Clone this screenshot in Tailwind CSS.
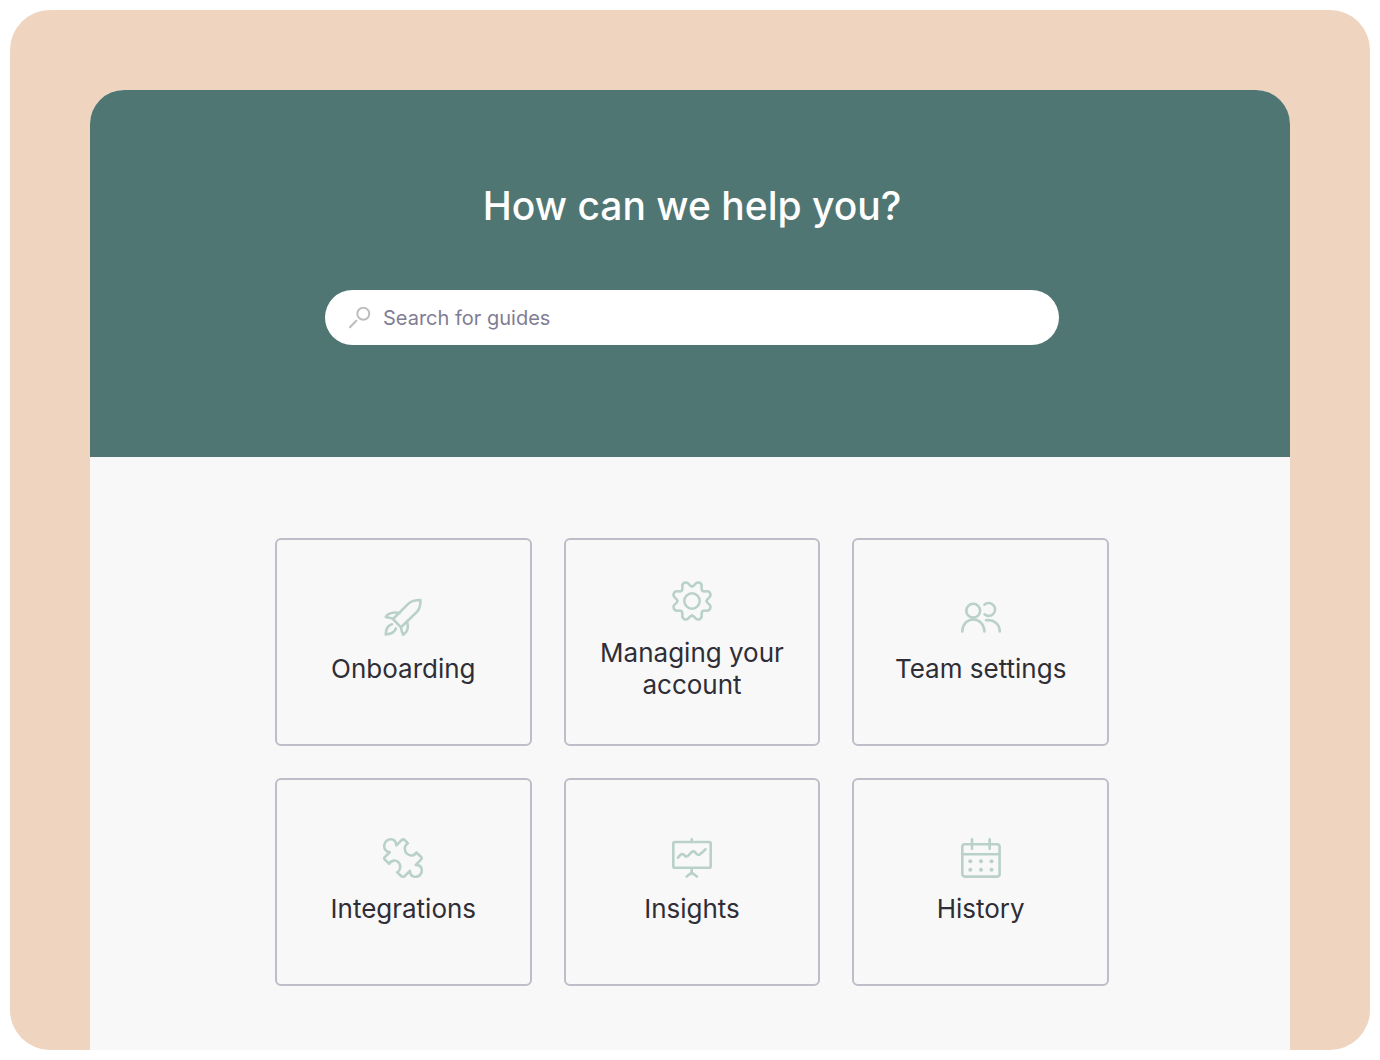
<!DOCTYPE html>
<html lang="en">
<head>
<meta charset="utf-8">
<meta name="viewport" content="width=device-width, initial-scale=1">
<title>Help center</title>
<script src="https://cdn.jsdelivr.net/npm/@tailwindcss/browser@4"></script>
</head>
<body class="flex min-h-screen flex-col bg-white p-[10px] font-['Inter',sans-serif] text-[#2f2e36]">
<div class="flex grow flex-col rounded-[40px] bg-[#efd4bf] px-20 pt-20">
  <div class="flex grow flex-col overflow-hidden rounded-t-[34px] bg-[#f8f8f8]">
    <header class="flex flex-col items-center bg-[#507673] pt-[92px] pb-28 pl-1">
      <h1 class="text-center text-[39px] leading-12 font-medium text-white">How can we help you?</h1>
      <form role="search" class="mt-15 flex h-[55px] w-full max-w-[734px] items-center gap-3 rounded-full bg-white px-6">
        <label for="q" class="shrink-0"><svg class="size-[22px] text-[#bdbcc0]" viewBox="0 0 22 22" fill="none" stroke="currentColor" stroke-width="2" stroke-linecap="round" role="img" aria-label="Search"><circle cx="14.3" cy="6.8" r="6"/><path d="M7.3 13.800 1 20.200"/></svg></label>
        <input id="q" type="search" placeholder="Search for guides" class="h-full min-w-0 grow bg-transparent text-[20px] outline-none placeholder:text-[#7f7d94]">
      </form>
    </header>
    <main class="flex justify-center pt-[81px] pb-16 pl-1">
      <nav aria-label="Guides" class="grid w-full max-w-[834px] auto-rows-[208px] grid-cols-3 gap-x-8 gap-y-8 text-center text-[26px] leading-8">
        <a href="#onboarding" class="flex flex-col items-center justify-center gap-[15px] rounded-md border-2 border-[#bfbec8] px-5 pb-px">
          <svg class="size-10 text-[#b9d1c9]" viewBox="0 0 40 40" fill="none" stroke="currentColor" stroke-width="2.6" stroke-linecap="round" stroke-linejoin="round" aria-hidden="true"><path d="M10 21 25.500 5.600C28.700 2.500 33 2 37.500 2c0 5-.8 9.200-3.800 12.200L18 29.300Z"/><path d="M16.500 15C10.500 13.500 4.500 15.500 2.800 19c2.800.6 5.300 1 7.700 2M24 23.500c1.700 5.500.3 10.500-3.700 13.200-1.500-2.400-2-4.700-2.300-7.400M9 26.300C4.500 27.500 2.800 31.500 2.700 36.500c5.600-.6 9.300-2 10.200-6.100"/></svg>
          <span>Onboarding</span>
        </a>
        <a href="#account" class="flex flex-col items-center justify-center gap-4 rounded-md border-2 border-[#bfbec8] px-5 pb-0.5">
          <svg class="size-10 text-[#b9d1c9]" viewBox="-19.500 -19.500 39 39" fill="none" stroke="currentColor" stroke-width="2.500" stroke-linecap="round" stroke-linejoin="round" aria-hidden="true"><defs><path id="tooth" d="M-5.470 -13.200C-2.200 -14.600 -4.900 -19.200 0 -19.200S2.200 -14.600 5.470 -13.200"/></defs><circle r="7.500"/><use href="#tooth" transform="rotate(22.500)"/><use href="#tooth" transform="rotate(67.500)"/><use href="#tooth" transform="rotate(112.500)"/><use href="#tooth" transform="rotate(157.500)"/><use href="#tooth" transform="rotate(202.500)"/><use href="#tooth" transform="rotate(247.500)"/><use href="#tooth" transform="rotate(292.500)"/><use href="#tooth" transform="rotate(337.500)"/></svg>
          <span>Managing your account</span>
        </a>
        <a href="#team" class="flex flex-col items-center justify-center gap-[15px] rounded-md border-2 border-[#bfbec8] px-5 pb-px">
          <svg class="size-10 text-[#b9d1c9]" viewBox="0 0 40 40" fill="none" stroke="currentColor" stroke-width="2.6" stroke-linecap="round" stroke-linejoin="round" aria-hidden="true"><circle cx="12.200" cy="12.700" r="6.900"/><path d="M1.300 33.500C1.300 26.500 6 21.500 12.200 21.500s11.200 5 11.200 12M23.500 6.600a6.400 6.400 0 1 1 0 9.700M25 22.300c8-1.200 13.700 4.200 13.700 11.200"/></svg>
          <span>Team settings</span>
        </a>
        <a href="#integrations" class="flex flex-col items-center justify-center gap-[15px] rounded-md border-2 border-[#bfbec8] px-5 pb-px">
          <svg class="size-10 text-[#b9d1c9]" viewBox="0 0 40 40" fill="none" stroke="currentColor" stroke-width="2.6" stroke-linecap="round" stroke-linejoin="round" aria-hidden="true"><path d="M6.700 14.200C2.500 13.700.9 10.500 1.300 7.200 1.600 3.900 4.500 1.300 7.800 1.300c3.400 0 5.200 2.300 5.600 6.100L18.600 2.200c1-1 2.300-1 3.300 0l2.900 3.100c-3.500 2-4 7-1.200 10.100 3.100 3.100 7.800 2.600 9.800-.9l4.500 4.200c1 1 1 2 0 3L32.800 26.900c4.200.2 6 2.600 6 5.700 0 3.400-2.800 6.200-6.200 6.200-3.100 0-5.500-2-5.700-5.900L21.500 38.200c-1 1-2.100 1-3.100 0L14.200 34.300c3.500-2 4-7.200 1.300-9.900-2.900-2.900-7.300-2.400-9.300 1.400L2 21.800c-1-1-1-2 0-3Z"/></svg>
          <span>Integrations</span>
        </a>
        <a href="#insights" class="flex flex-col items-center justify-center gap-[15px] rounded-md border-2 border-[#bfbec8] px-5 pb-px">
          <svg class="size-10 text-[#b9d1c9]" viewBox="0 0 40 40" fill="none" stroke="currentColor" stroke-width="2.6" stroke-linecap="round" stroke-linejoin="round" aria-hidden="true"><rect x="1.300" y="4" width="37.400" height="25.700" rx="1.500"/><path d="M19.700 1.300V4M19.700 30v4.500L14.700 38.500M19.700 34.500l5.200 4M6 19.600l2.400-2.700c1.300-1.300 2.500-1.200 3.700.1 1.700 1.900 3 1.900 4.700.1l2.500-2.700c1.500-1.400 2.700-1.200 4 .1 2.500 3.300 3.600 3.300 6 .7l4.200-3.900"/></svg>
          <span>Insights</span>
        </a>
        <a href="#history" class="flex flex-col items-center justify-center gap-[15px] rounded-md border-2 border-[#bfbec8] px-5 pb-px">
          <svg class="size-10 text-[#b9d1c9]" viewBox="0 0 40 40" fill="none" stroke="currentColor" stroke-width="2.6" stroke-linecap="round" stroke-linejoin="round" aria-hidden="true"><rect x="1.300" y="6.200" width="37.300" height="32.400" rx="2.500"/><path d="M1.300 16.200h37.300M11 1.300v9.400M28.700 1.300v9.400"/><g fill="currentColor" stroke="none"><circle cx="9.300" cy="23.200" r="2"/><circle cx="20" cy="23.200" r="2"/><circle cx="30.500" cy="23.200" r="2"/><circle cx="9.300" cy="31.700" r="2"/><circle cx="20" cy="31.700" r="2"/><circle cx="30.500" cy="31.700" r="2"/></g></svg>
          <span>History</span>
        </a>
      </nav>
    </main>
  </div>
</div>
</body>
</html>
